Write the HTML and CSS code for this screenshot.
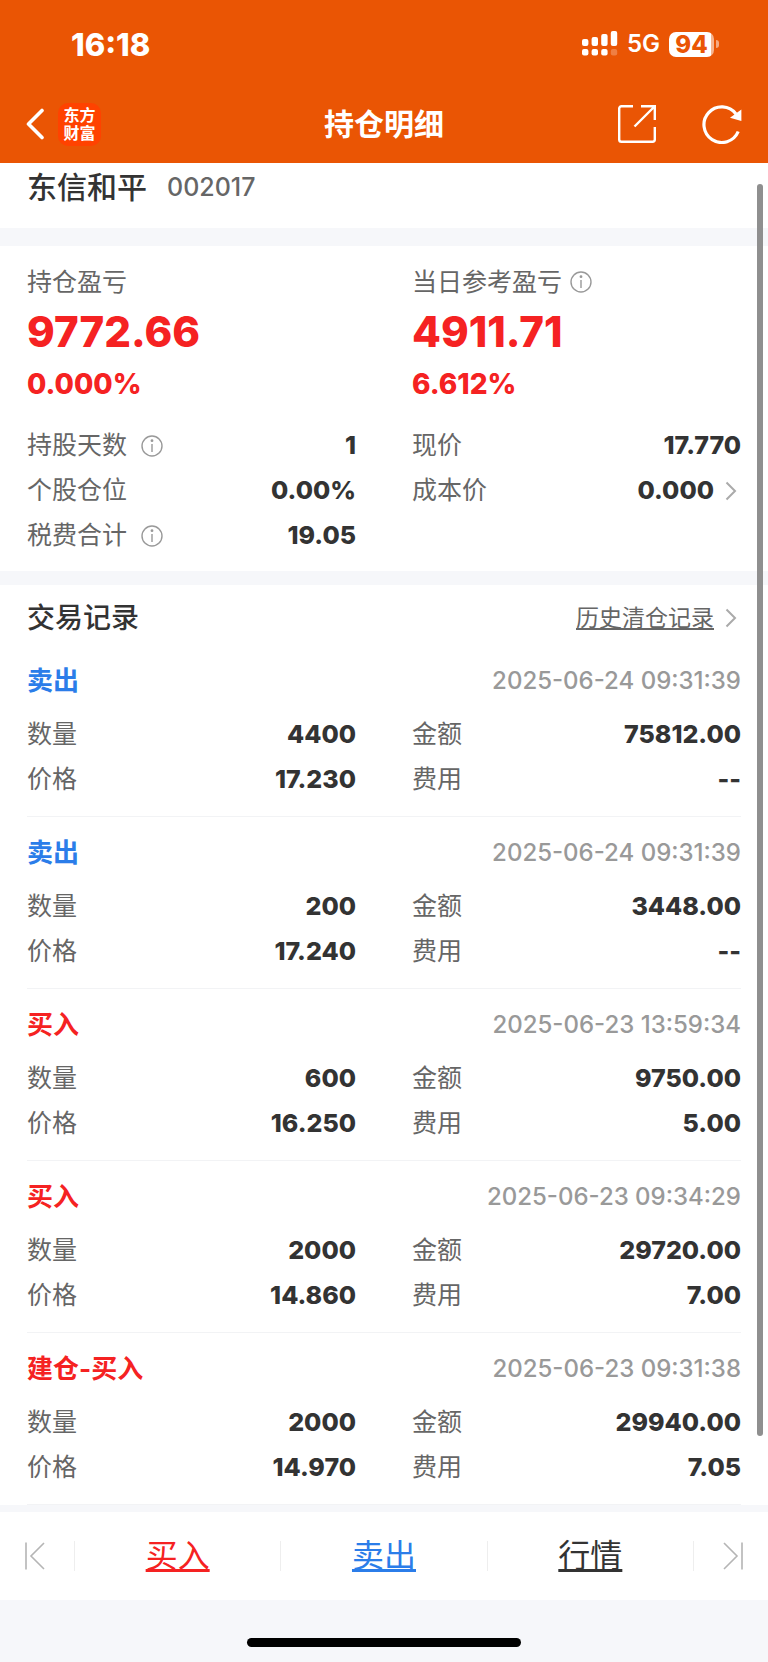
FILE: index.html
```html
<!DOCTYPE html>
<html lang="zh-CN">
<head>
    <meta charset="UTF-8">
    <meta name="viewport" content="width=device-width, initial-scale=1.0">
    <title>持仓明细</title>
    <link rel="stylesheet" href="styles.css">
</head>
<body>
    <header class="header">
        <div class="status-bar">
            <span class="time">16:18</span>
            <div class="status-icons">
                <svg class="signal" width="36" height="26" viewBox="0 0 36 26" fill="#fff">
                    <rect x="0" y="8" width="6.4" height="7" rx="2"/>
                    <rect x="9.6" y="6" width="6.4" height="9" rx="2"/>
                    <rect x="19.2" y="3" width="6.4" height="12" rx="2"/>
                    <rect x="28.8" y="0" width="6.4" height="15" rx="2"/>
                    <rect x="0" y="18" width="6.4" height="6.5" rx="2"/>
                    <rect x="9.6" y="18" width="6.4" height="6.5" rx="2"/>
                    <rect x="19.2" y="18" width="6.4" height="6.5" rx="2"/>
                    <rect x="28.8" y="18" width="6.4" height="6.5" rx="2" opacity=".25"/>
                </svg>
                <span class="network">5G</span>
                <span class="battery"><span class="battery-level">94</span></span>
            </div>
        </div>
        <nav class="nav-bar">
            <div class="nav-left">
                <button class="icon-btn" aria-label="返回">
                    <svg width="20" height="32" viewBox="0 0 20 32" fill="none" stroke="#fff" stroke-width="3.6" stroke-linecap="round" stroke-linejoin="round">
                        <path d="M17 2.500L3.500 16l13.500 13.500"/>
                    </svg>
                </button>
                <a class="logo" href="#">东方<br>财富</a>
            </div>
            <h1>持仓明细</h1>
            <div class="nav-right">
                <button class="icon-btn" aria-label="分享">
                    <svg width="40" height="40" viewBox="0 0 40 40" fill="none" stroke="#fff" stroke-width="2.4">
                        <path d="M16 2.2H4.5a2.3 2.3 0 0 0-2.3 2.3v31a2.3 2.3 0 0 0 2.3 2.3h31a2.3 2.3 0 0 0 2.3-2.3V23"/>
                        <path d="M24 2.2h13.8V16M37 3L17.5 22.5"/>
                    </svg>
                </button>
                <button class="icon-btn" aria-label="刷新">
                    <svg width="42" height="40" viewBox="0 0 42 40" fill="none">
                        <path d="M37.200 27.500A17.800 17.800 0 1 1 35 10" stroke="#fff" stroke-width="3.2"/>
                        <path d="M40.4 5.500v11.600l-11.400-3.400z" fill="#fff"/>
                    </svg>
                </button>
            </div>
        </nav>
    </header>

    <main class="content">
        <section class="stock">
            <h2>东信和平</h2>
            <span class="code">002017</span>
        </section>

        <section class="summary">
            <div class="columns">
                <div>
                    <div class="profit-label">持仓盈亏</div>
                    <div class="profit">9772.66</div>
                    <div class="percent">0.000%</div>
                </div>
                <div>
                    <div class="profit-label">当日参考盈亏
                        <svg class="info near" viewBox="0 0 22 22"><circle cx="11" cy="11" r="10"/><path d="M11 9v8"/><circle class="dot" cx="11" cy="5.7" r="1.4"/></svg>
                    </div>
                    <div class="profit">4911.71</div>
                    <div class="percent">6.612%</div>
                </div>
            </div>
            <div class="columns details">
                <dl>
                    <div class="row">
                        <dt>持股天数
                            <svg class="info" viewBox="0 0 22 22"><circle cx="11" cy="11" r="10"/><path d="M11 9v8"/><circle class="dot" cx="11" cy="5.7" r="1.4"/></svg>
                        </dt>
                        <dd>1</dd>
                    </div>
                    <div class="row"><dt>个股仓位</dt><dd>0.00%</dd></div>
                    <div class="row">
                        <dt>税费合计
                            <svg class="info" viewBox="0 0 22 22"><circle cx="11" cy="11" r="10"/><path d="M11 9v8"/><circle class="dot" cx="11" cy="5.7" r="1.4"/></svg>
                        </dt>
                        <dd>19.05</dd>
                    </div>
                </dl>
                <dl>
                    <div class="row"><dt>现价</dt><dd>17.770</dd></div>
                    <div class="row">
                        <dt>成本价</dt>
                        <dd>0.000<svg class="arrow" viewBox="0 0 12 20"><path d="M1.5 1.5L10 10l-8.500 8.500"/></svg></dd>
                    </div>
                </dl>
            </div>
        </section>

        <section class="records">
            <div class="records-header">
                <h2>交易记录</h2>
                <a class="history" href="#"><span>历史清仓记录</span><svg class="arrow" viewBox="0 0 12 20"><path d="M1.500 1.500L10 10l-8.500 8.500"/></svg></a>
            </div>

            <article class="record">
                <div class="record-head"><h3 class="sell">卖出</h3><time>2025-06-24 09:31:39</time></div>
                <dl class="columns">
                    <div class="row"><dt>数量</dt><dd>4400</dd></div>
                    <div class="row"><dt>金额</dt><dd>75812.00</dd></div>
                    <div class="row"><dt>价格</dt><dd>17.230</dd></div>
                    <div class="row"><dt>费用</dt><dd>--</dd></div>
                </dl>
            </article>

            <article class="record">
                <div class="record-head"><h3 class="sell">卖出</h3><time>2025-06-24 09:31:39</time></div>
                <dl class="columns">
                    <div class="row"><dt>数量</dt><dd>200</dd></div>
                    <div class="row"><dt>金额</dt><dd>3448.00</dd></div>
                    <div class="row"><dt>价格</dt><dd>17.240</dd></div>
                    <div class="row"><dt>费用</dt><dd>--</dd></div>
                </dl>
            </article>

            <article class="record">
                <div class="record-head"><h3 class="buy">买入</h3><time>2025-06-23 13:59:34</time></div>
                <dl class="columns">
                    <div class="row"><dt>数量</dt><dd>600</dd></div>
                    <div class="row"><dt>金额</dt><dd>9750.00</dd></div>
                    <div class="row"><dt>价格</dt><dd>16.250</dd></div>
                    <div class="row"><dt>费用</dt><dd>5.00</dd></div>
                </dl>
            </article>

            <article class="record">
                <div class="record-head"><h3 class="buy">买入</h3><time>2025-06-23 09:34:29</time></div>
                <dl class="columns">
                    <div class="row"><dt>数量</dt><dd>2000</dd></div>
                    <div class="row"><dt>金额</dt><dd>29720.00</dd></div>
                    <div class="row"><dt>价格</dt><dd>14.860</dd></div>
                    <div class="row"><dt>费用</dt><dd>7.00</dd></div>
                </dl>
            </article>

            <article class="record">
                <div class="record-head"><h3 class="buy">建仓-买入</h3><time>2025-06-23 09:31:38</time></div>
                <dl class="columns">
                    <div class="row"><dt>数量</dt><dd>2000</dd></div>
                    <div class="row"><dt>金额</dt><dd>29940.00</dd></div>
                    <div class="row"><dt>价格</dt><dd>14.970</dd></div>
                    <div class="row"><dt>费用</dt><dd>7.05</dd></div>
                </dl>
            </article>
        </section>
        <div class="scrollbar"></div>
    </main>

    <nav class="tab-bar">
        <button class="tab-end" aria-label="上一只">
            <svg width="20" height="28" viewBox="0 0 20 28"><path d="M1 .5v27M19 1L6 14l13 13"/></svg>
        </button>
        <a class="tab buy" href="#">买入</a>
        <a class="tab sell" href="#">卖出</a>
        <a class="tab" href="#">行情</a>
        <button class="tab-end next" aria-label="下一只">
            <svg width="20" height="28" viewBox="0 0 20 28"><path d="M19 .5v27M1 1l13 13L1 27"/></svg>
        </button>
    </nav>
    <footer class="home-area">
        <div class="home-indicator"></div>
    </footer>
</body>
</html>
```
FILE: styles.css
```css
* {
    box-sizing: border-box;
    margin: 0;
    padding: 0;
}

body {
    font-family: Inter, "Noto Sans CJK SC", sans-serif;
    font-size: 25px;
    line-height: 1;
    color: #333;
    background: #f6f7fa;
}

button {
    border: none;
    background: none;
    cursor: pointer;
}

svg {
    display: block;
    flex: none;
}

a {
    color: inherit;
}

/* Header */
.header {
    background: #ea5504;
    color: #fff;
    height: 163px;
}

.status-bar {
    display: flex;
    justify-content: space-between;
    align-items: center;
    height: 88px;
    padding: 0 49px 0 71px;
}

.time {
    font-size: 31px;
    font-weight: 800;
}

.status-icons {
    display: flex;
    align-items: center;
    gap: 9px;
}

.network {
    font-size: 24px;
    font-weight: 600;
}

.battery {
    display: flex;
    align-items: center;
    gap: 2px;
}

.battery::after {
    content: "";
    width: 3px;
    height: 8px;
    border-radius: 0 4px 4px 0;
    background: rgba(255, 255, 255, 0.5);
}

.battery-level {
    width: 45px;
    height: 25px;
    border-radius: 7px;
    background: linear-gradient(to right, #fff 94%, #f6b48f 94%);
    color: #ea5504;
    font-size: 24px;
    font-weight: 800;
    line-height: 25px;
    text-align: center;
}

.nav-bar {
    display: grid;
    grid-template-columns: 1fr auto 1fr;
    align-items: center;
    height: 72px;
    padding: 0 25px;
}

.nav-left,
.nav-right {
    display: flex;
    align-items: center;
}

.nav-left {
    gap: 13px;
}

.nav-right {
    justify-content: flex-end;
    gap: 44px;
}

.logo {
    width: 43px;
    height: 43px;
    padding-top: 3px;
    border-radius: 10px;
    background: #ff4200;
    font-size: 16px;
    font-weight: 700;
    line-height: 18px;
    text-align: center;
    text-decoration: none;
}

h1 {
    font-size: 30px;
    font-weight: 700;
}

/* Stock name */
.content {
    position: relative;
}

.stock,
.summary,
.records {
    background: #fff;
    padding: 0 27px;
}

.stock {
    display: flex;
    align-items: center;
    gap: 20px;
    padding-bottom: 17px;
    margin-bottom: 18px;
    line-height: 48px;
}

.stock h2 {
    font-size: 30px;
    font-weight: 500;
}

.code {
    color: #666;
    font-weight: 500;
}

/* Profit summary */
.summary {
    padding-top: 12px;
    padding-bottom: 13px;
    margin-bottom: 14px;
}

.columns {
    display: grid;
    grid-template-columns: 1fr 1fr;
    column-gap: 56px;
}

.profit-label {
    display: flex;
    align-items: center;
    line-height: 48px;
    color: #666;
}

.profit {
    font-size: 42px;
    font-weight: 800;
    line-height: 52px;
    color: #f52222;
}

.percent {
    font-size: 28px;
    font-weight: 800;
    line-height: 52px;
    color: #f52222;
}

.details {
    margin-top: 13px;
}

.row {
    display: flex;
    justify-content: space-between;
    line-height: 45px;
}

.row dt {
    display: flex;
    align-items: center;
    color: #666;
}

.row dd {
    display: flex;
    align-items: center;
    font-weight: 800;
}

.info {
    width: 22px;
    height: 22px;
    margin-left: 14px;
    fill: none;
    stroke: #999;
    stroke-width: 1.4;
}

.info.near {
    margin-left: 8px;
}

.info .dot {
    fill: #999;
    stroke: none;
}

.arrow {
    width: 12px;
    height: 20px;
    margin: 0 4px 0 11px;
    fill: none;
    stroke: #aaa;
    stroke-width: 2;
}

/* Trade records */
.records {
    padding-top: 6px;
}

.records-header,
.record-head {
    display: flex;
    justify-content: space-between;
    align-items: center;
}

.records-header {
    height: 54px;
}

.records-header h2 {
    font-size: 28px;
    font-weight: 500;
}

.history {
    display: flex;
    align-items: center;
    color: #666;
    font-size: 23px;
    text-decoration: none;
}

.history span {
    text-decoration: underline;
}

.record {
    padding: 8px 0 14px;
    border-bottom: 1px solid #f2f3f5;
}

.record-head {
    height: 56px;
    margin-bottom: 3px;
}

.record-head h3 {
    font-size: 26px;
    font-weight: 700;
}

.record-head time {
    color: #999;
    font-size: 24px;
    font-weight: 500;
}

.buy {
    color: #f52222;
}

.sell {
    color: #2b7de9;
}

.scrollbar {
    position: absolute;
    top: 21px;
    right: 5px;
    bottom: 69px;
    width: 6px;
    border-radius: 3px;
    background: #8f8f8f;
}

/* Bottom tabs */
.tab-bar {
    display: flex;
    align-items: center;
    height: 88px;
    margin-top: 7px;
    background: #fff;
}

.tab,
.tab-end {
    display: flex;
    align-items: center;
    justify-content: center;
    height: 30px;
}

.tab {
    flex: 1;
    border-left: 1px solid #eee;
    font-size: 32px;
}

.tab:last-of-type {
    border-right: 1px solid #eee;
}

.tab-end {
    justify-content: flex-start;
    width: 74px;
    padding: 0 25px;
}

.tab-end.next {
    justify-content: flex-end;
}

.tab-end path {
    fill: none;
    stroke: #b5b5b5;
    stroke-width: 1.6;
}

.home-area {
    height: 62px;
    padding-top: 38px;
}

.home-indicator {
    width: 274px;
    height: 9px;
    margin: 0 auto;
    border-radius: 5px;
    background: #000;
}
```
